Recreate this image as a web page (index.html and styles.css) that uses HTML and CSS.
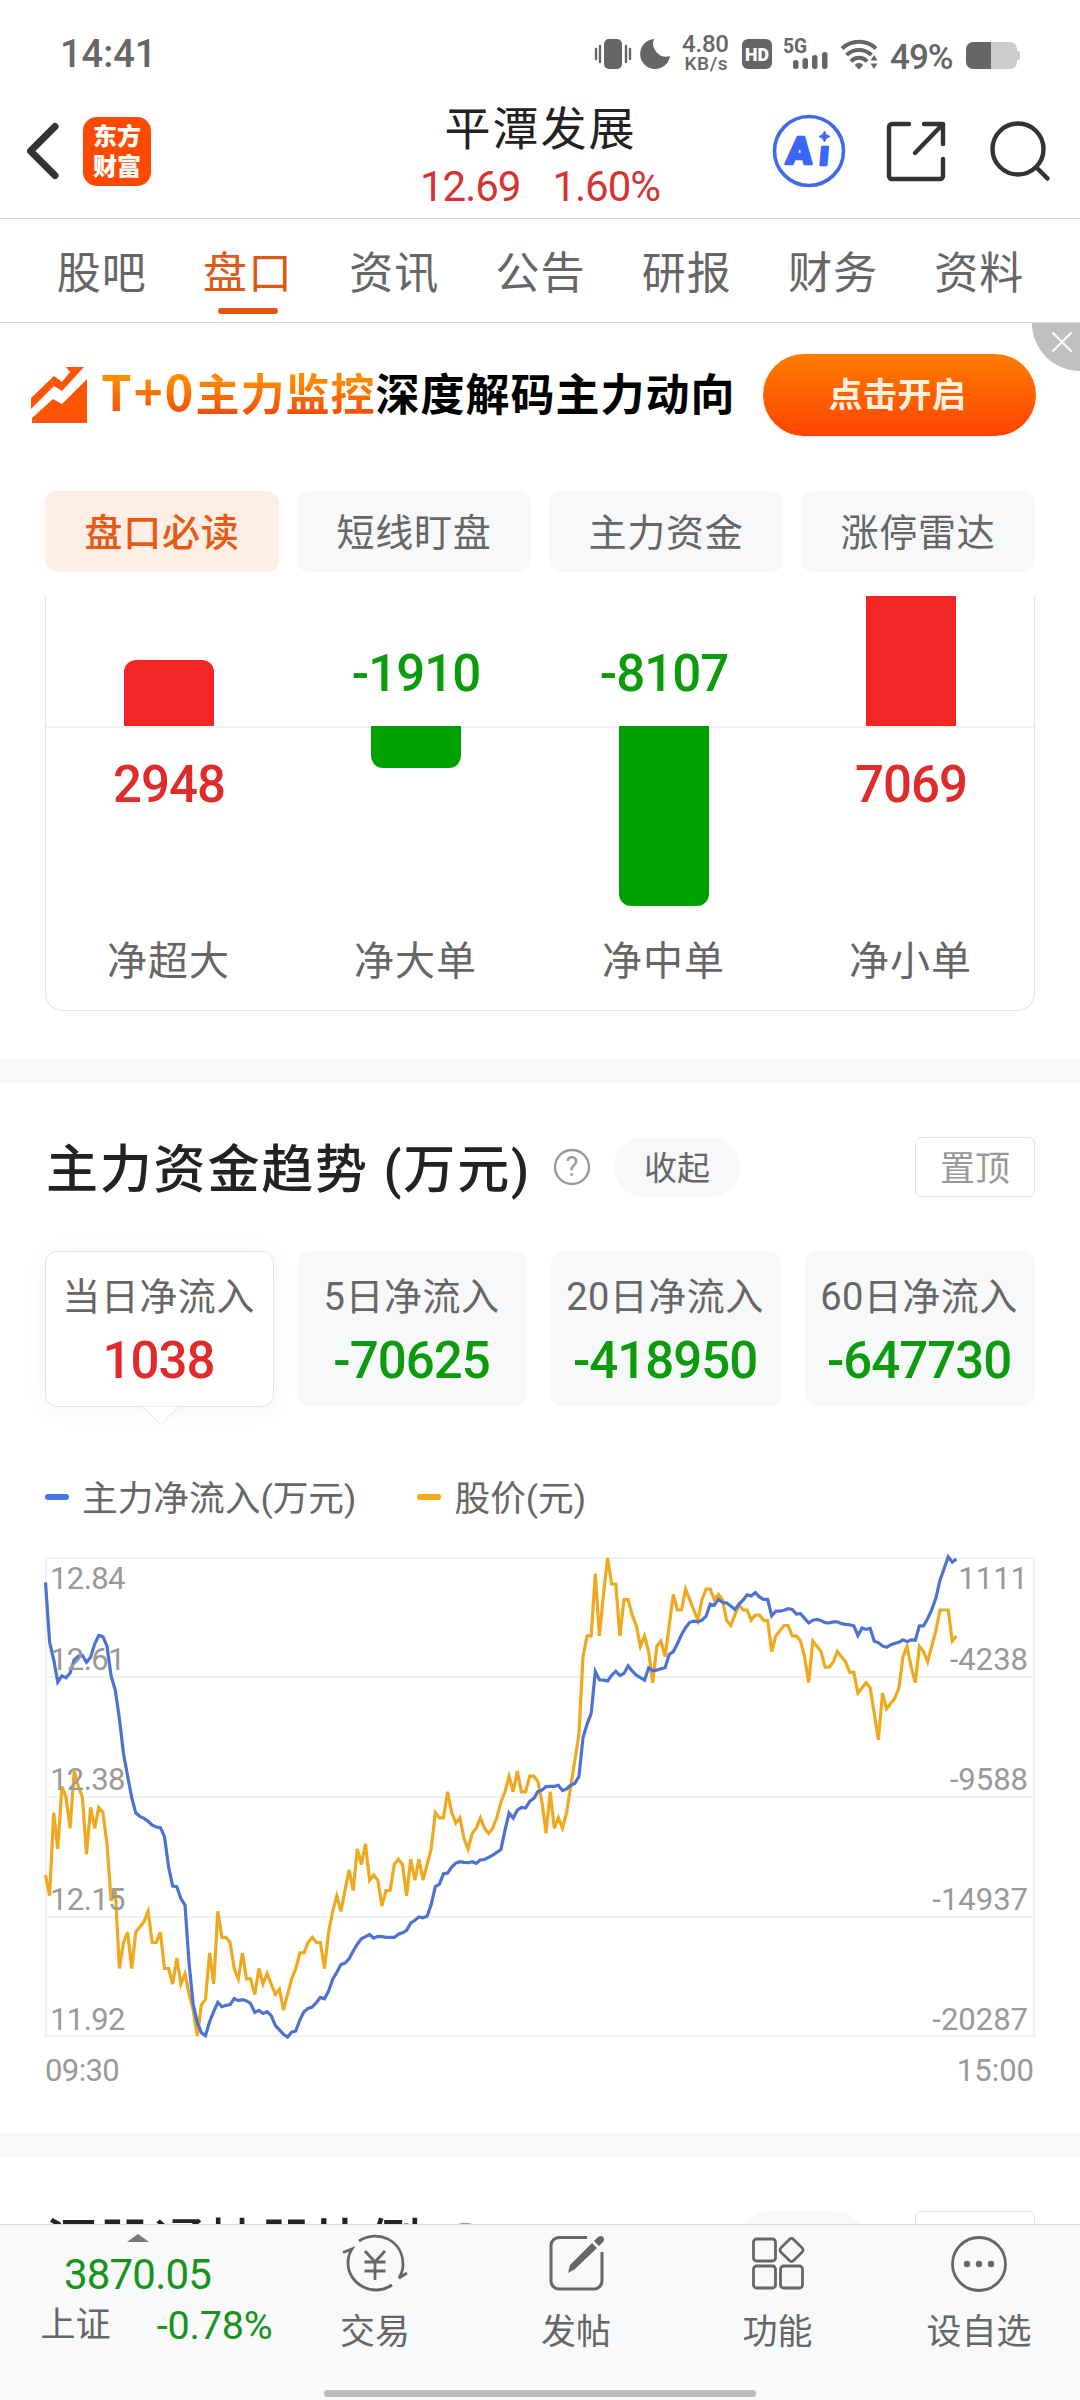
FILE: index.html
```html
<!DOCTYPE html>
<html lang="zh-CN">
<head>
    <title>平潭发展</title>
    <meta charset="utf-8"/>
    <link rel="stylesheet" href="styles.css">
</head>

<body>
    <div class="status-bar">
        <span class="clock">14:41</span>
        <svg class="status-icons" width="210" height="40" viewBox="0 0 210 40">
            <g fill="#666">
                <rect x="9" y="5" width="18" height="30" rx="5"/>
                <path d="M1 15v10M5 12v16M31 12v16M35 15v10" stroke="#666" stroke-width="2.4" stroke-linecap="round"/>
                <path d="M59 5A15 15 0 1 0 75 22A13 13 0 0 1 59 5Z"/>
                <text x="87" y="18" class="speed" textLength="47">4.80</text>
                <text x="89.500" y="36" class="speed small" textLength="43">KB/s</text>
                <rect x="147" y="5" width="30" height="30" rx="6"/>
                <text x="150" y="27" class="hd" textLength="24" lengthAdjust="spacingAndGlyphs">HD</text>
                <text x="188" y="19" class="net" textLength="24" lengthAdjust="spacingAndGlyphs">5G</text>
            </g>
        </svg>
        <svg class="signal-icons" width="100" height="40" viewBox="0 0 100 40">
            <g fill="#666">
                <rect x="2" y="26" width="5.500" height="9" rx="2.500"/>
                <rect x="11.500" y="24" width="5.500" height="11" rx="2.500"/>
                <rect x="21" y="21" width="5.500" height="14" rx="2.500"/>
                <rect x="31" y="18" width="5.500" height="17" rx="2.500"/>
                <path d="M68 29c-2.500 0-4 1-4 2.500l4 4 4-4c0-1.500-1.500-2.500-4-2.500z"/>
                <path d="M83 21l3.500 5.500h-7zM83 35l3.500-5.500h-7z"/>
            </g>
            <path d="M51 14.500a25 25 0 0 1 34 0M55.500 21a18 18 0 0 1 25 0M60 27.500a10.500 10.500 0 0 1 16 0" fill="none" stroke="#666" stroke-width="4"/>
        </svg>
        <span class="battery-text">49%</span>
        <span class="battery"><i></i></span>
    </div>

    <div class="header">
        <svg class="back" width="34" height="58" viewBox="0 0 34 58"><path d="M29 4.500L4.500 29L29 53.500" fill="none" stroke="#333" stroke-width="7" stroke-linecap="round" stroke-linejoin="round"/></svg>
        <div class="logo"><span>东方</span><span>财富</span></div>
        <div class="stock">
            <div class="stock-name">平潭发展</div>
            <div class="stock-price"><span>12.69</span><span>1.60%</span></div>
        </div>
        <div class="header-icons">
            <svg width="74" height="76" viewBox="0 0 74 76">
                <circle cx="37" cy="38" r="34.500" fill="none" stroke="#4169e8" stroke-width="3.600"/>
                <text x="18" y="51" class="ai" transform="skewX(-5)">A</text>
                <text x="51" y="52" class="ai i" transform="skewX(-5)">ı</text>
                <path d="M52.500 18q1 4.500 5.500 5.500q-4.500 1-5.500 5.500q-1-4.500-5.500-5.500q4.500-1 5.500-5.500z" fill="#3f68f0" stroke="#3f68f0"/>
            </svg>
            <svg class="share" width="60" height="60" viewBox="0 0 60 60"><path d="M22 3H5a3 3 0 0 0-3 3v49a3 3 0 0 0 3 3h48a3 3 0 0 0 3-3V38M37 3h19v20M56 3L28 32" fill="none" stroke="#333" stroke-width="4.400" stroke-linecap="round" stroke-linejoin="round"/></svg>
            <svg class="search" width="62" height="64" viewBox="0 0 62 64"><circle cx="29" cy="29" r="25.500" fill="none" stroke="#333" stroke-width="4.400"/><path d="M47.500 47.500l11 11" stroke="#333" stroke-width="4.500" stroke-linecap="round"/></svg>
        </div>
    </div>

    <div class="tabs">
        <span>股吧</span>
        <span class="active">盘口</span>
        <span>资讯</span>
        <span>公告</span>
        <span>研报</span>
        <span>财务</span>
        <span>资料</span>
    </div>

    <div class="banner">
        <svg width="58" height="58" viewBox="0 0 58 58"><path d="M1 57V52L22 33L31 38L56 13V57zM0 32L23 10L31 16L39 6L35 1H53L31 25L23 20L0 43z" fill="#ff5404"/></svg>
        <div class="banner-text"><span class="hot"><b>T+0</b>主力监控</span>深度解码主力动向</div>
        <div class="banner-btn">点击开启</div>
        <div class="close"><svg width="22" height="22" viewBox="0 0 22 22"><path d="M1.500 1.500l19 19M20.500 1.500l-19 19" stroke="#fff" stroke-width="2"/></svg></div>
    </div>

    <div class="chips">
        <span class="active">盘口必读</span>
        <span>短线盯盘</span>
        <span>主力资金</span>
        <span>涨停雷达</span>
    </div>

    <!-- order flow bars -->
    <div class="order-card">
        <div class="order-col">
            <div class="upper"><i class="bar red" style="height:66px"></i></div>
            <div class="lower"><b class="red-text">2948</b></div>
            <p>净超大</p>
        </div>
        <div class="order-col">
            <div class="upper"><b class="green-text">-1910</b></div>
            <div class="lower"><i class="bar green" style="height:42px"></i></div>
            <p>净大单</p>
        </div>
        <div class="order-col">
            <div class="upper"><b class="green-text">-8107</b></div>
            <div class="lower"><i class="bar green" style="height:180px"></i></div>
            <p>净中单</p>
        </div>
        <div class="order-col">
            <div class="upper"><i class="bar red cut" style="height:130px"></i></div>
            <div class="lower"><b class="red-text">7069</b></div>
            <p>净小单</p>
        </div>
    </div>

    <div class="section trend">
        <div class="section-head">
            <h2>主力资金趋势 (万元)</h2>
            <svg class="help" width="38" height="38" viewBox="0 0 38 38"><circle cx="19" cy="19" r="17" fill="none" stroke="#999" stroke-width="2.400"/><text x="19" y="28" text-anchor="middle">?</text></svg>
            <span class="pill">收起</span>
            <span class="pin">置顶</span>
        </div>
        <div class="periods">
            <div class="period active"><span>当日净流入</span><b class="red-text">1038</b></div>
            <div class="period"><span>5日净流入</span><b class="green-text">-70625</b></div>
            <div class="period"><span>20日净流入</span><b class="green-text">-418950</b></div>
            <div class="period"><span>60日净流入</span><b class="green-text">-647730</b></div>
        </div>
        <div class="legend">
            <span><i class="blue"></i>主力净流入(万元)</span>
            <span><i class="yellow"></i>股价(元)</span>
        </div>
        <svg class="chart" width="1080" height="550" viewBox="0 0 1080 550">
            <path class="grid" d="M46 18H1034V496H46zM46 137H1034M46 257H1034M46 377H1034"/>
            <polyline id="price" class="line-price"/>
            <polyline id="flow" class="line-flow"/>
            <g class="axis">
                <text x="50" y="48.500">12.84</text>
                <text x="50" y="130">12.61</text>
                <text x="50" y="250">12.38</text>
                <text x="50" y="370">12.15</text>
                <text x="50" y="490">11.92</text>
                <text x="45" y="541">09:30</text>
            </g>
            <g class="axis end">
                <text x="1028" y="48.500">1111</text>
                <text x="1028" y="130">-4238</text>
                <text x="1028" y="250">-9588</text>
                <text x="1028" y="370">-14937</text>
                <text x="1028" y="490">-20287</text>
                <text x="1034" y="541">15:00</text>
            </g>
        </svg>
    </div>

    <div class="section holding">
        <div class="section-head">
            <h2>深股通持股比例</h2>
            <svg class="help" width="38" height="38" viewBox="0 0 38 38"><circle cx="19" cy="19" r="17" fill="none" stroke="#999" stroke-width="2.400"/></svg>
            <span class="pill"></span>
            <span class="pin"></span>
        </div>
    </div>

    <div class="bottom-bar">
        <div class="index">
            <svg width="22" height="8" viewBox="0 0 22 8"><path d="M0 8L11 0L22 8z" fill="#77787c"/></svg>
            <div class="index-value">3870.05</div>
            <div class="index-row"><span>上证</span><span class="change">-0.78%</span></div>
        </div>
        <div class="nav-item">
            <svg width="68" height="62" viewBox="0 0 68 62" fill="none" stroke="#666" stroke-width="2.800">
                <path d="M18 9C37-3 62 8 62 33q0 6-4 13l8-5"/>
                <path d="M51 53C32 66 7 52 7 31q0-8 4-14l-9 3.500"/>
                <path d="M24 19l10 11l10-11M34 30v18M23.500 30h21M23.500 39h21"/>
            </svg>
            <span>交易</span>
        </div>
        <div class="nav-item">
            <svg width="62" height="62" viewBox="0 0 62 62">
                <path d="M42 5.500H14a8 8 0 0 0-8 8V49a8 8 0 0 0 8 8h35a8 8 0 0 0 8-8V20" fill="none" stroke="#666" stroke-width="3"/>
                <path d="M23 41l2-8L47 11l5 5L30 37zM49 9l4-4q3-2 5 0t0 5l-4 4z" fill="#666"/>
            </svg>
            <span>发帖</span>
        </div>
        <div class="nav-item">
            <svg width="58" height="62" viewBox="0 0 58 62" fill="none" stroke="#666" stroke-width="2.800">
                <rect x="4.500" y="7" width="22" height="22" rx="3"/>
                <rect x="4.500" y="34" width="22" height="22" rx="3"/>
                <rect x="31.500" y="34" width="22" height="22" rx="3"/>
                <rect x="33.500" y="9" width="18" height="18" rx="3" transform="rotate(45 42.500 18)"/>
            </svg>
            <span>功能</span>
        </div>
        <div class="nav-item">
            <svg width="60" height="62" viewBox="0 0 60 62">
                <circle cx="30" cy="32" r="26.500" fill="none" stroke="#666" stroke-width="2.800"/>
                <g fill="#666"><circle cx="18" cy="32" r="3.200"/><circle cx="30" cy="32" r="3.200"/><circle cx="42" cy="32" r="3.200"/></g>
            </svg>
            <span>设自选</span>
        </div>
        <div class="home-line"></div>
    </div>

    <script src="chart.js"></script>
</body>
</html>
```
FILE: styles.css
```css
* {
    box-sizing: border-box;
}
body {
    position: relative;
    width: 1080px;
    height: 2400px;
    margin: 0px;
    overflow: hidden;
    background-color: #fff;
    color: #666;
    font-family: Roboto, "Noto Sans CJK SC", sans-serif;
}
svg {
    display: block;
    flex: none;
    overflow: visible;
}
i, b, h2, p {
    margin: 0px;
    font-style: normal;
}

/* status bar */
.status-bar {
    display: flex;
    align-items: center;
    height: 108px;
    padding: 0px 0px 0px 60px;
}
.clock {
    width: 535px;
    font-size: 38px;
    font-weight: 500;
}
.status-icons {
    margin-bottom: 1px;
}
.signal-icons {
    margin-left: -14px;
}
.speed {font-size: 24px; font-weight: 500;}
.speed.small {font-size: 19px;}
.hd {font-size: 18px; font-weight: 900; fill: #fff;}
.net {font-size: 21px; font-weight: 700;}
.battery-text {
    width: 76px;
    font-size: 35px;
    font-weight: 500;
    letter-spacing: -1px;
    padding-top: 6px;
    margin-left: -1px;
}
.battery {
    display: flex;
    align-items: center;
    margin-top: 3px;
}
.battery i {
    width: 51px;
    height: 27px;
    border-radius: 7px;
    background: linear-gradient(90deg, #666 25px, #ccc 25px);
}
.battery::after {
    content: "";
    width: 3px;
    height: 9px;
    border-radius: 0px 2px 2px 0px;
    background-color: #ccc;
}

/* header */
.header {
    display: flex;
    height: 111px;
    border-bottom: 1px solid #d8d8d8;
}
.back {
    margin: 14px 0px 0px 26px;
}
.logo {
    display: flex;
    flex-direction: column;
    justify-content: center;
    width: 68px;
    height: 69px;
    margin: 9px 0px 0px 23px;
    border-radius: 14px;
    background-color: #ff4800;
    color: #fff;
    font-size: 24px;
    font-weight: 900;
    line-height: 30px;
    text-align: center;
}
.stock {
    width: 540px;
    margin-left: 119px;
    text-align: center;
}
.stock-name {
    height: 46px;
    padding-left: 1px;
    color: #222;
    font-size: 46px;
    letter-spacing: 2px;
    line-height: 42px;
}
.stock-price {
    display: flex;
    justify-content: center;
    gap: 32px;
    padding-top: 12px;
    color: #d63434;
    font-size: 42px;
    line-height: 42px;
    letter-spacing: -1px;
}
.header-icons {
    display: flex;
    margin-left: -38px;
}
.header-icons svg {margin-top: 5px;}
.header-icons .share {margin: 13px 0px 0px 41px;}
.header-icons .search {margin: 12px 0px 0px 42px;}
.ai {
    font-size: 38px;
    font-weight: 900;
    fill: #3a66fa;
    stroke: #3a66fa;
    stroke-width: 2.5;
    stroke-linejoin: round;
}
.ai.i {font-size: 34px;}

/* tabs */
.tabs {
    display: grid;
    grid-template-columns: repeat(7, 1fr);
    height: 104px;
    padding: 0px 28px;
    border-bottom: 1px solid #d8d8d8;
    font-size: 44px;
    letter-spacing: 1px;
    text-align: center;
}
.tabs span {
    display: flex;
    flex-direction: column;
    align-items: center;
    height: 96px;
    padding-left: 1px;
    line-height: 110px;
}
.tabs .active {
    color: #dc5a14;
}
.tabs .active::after {
    content: "";
    width: 60px;
    height: 6px;
    flex: none;
    margin-top: -21px;
    border-radius: 3px;
    background-color: #e2570c;
}

/* banner */
.banner {
    position: relative;
    display: flex;
    align-items: center;
    height: 143px;
    padding-left: 31px;
}
.banner-text {
    width: 662px;
    padding: 0px 0px 3px 12px;
    color: #000;
    font-size: 44px;
    font-weight: 700;
    letter-spacing: 1px;
    line-height: 60px;
    white-space: nowrap;
}
.hot {
    background: linear-gradient(#ff8a00 20%, #f4500a 80%);
    -webkit-background-clip: text;
    background-clip: text;
    color: transparent;
}
.hot b {
    font-family: "Noto Sans CJK SC", sans-serif;
    font-size: 49px;
    font-weight: 700;
    letter-spacing: 2px;
}
.banner-btn {
    width: 273px;
    height: 82px;
    margin: 0px 0px 0px 12px;
    border-radius: 42px;
    background: linear-gradient(#ff7d00, #ff4400);
    color: #fff3e0;
    font-size: 34px;
    font-weight: 700;
    letter-spacing: 0.5px;
    line-height: 82px;
    padding-right: 4px;
    text-align: center;
}
.close {
    position: absolute;
    top: 0px;
    right: 0px;
    width: 48px;
    height: 48px;
    padding: 8px 0px 0px 19px;
    border-bottom-left-radius: 48px;
    background-color: #bfbfbf;
}

/* sub tabs */
.chips {
    display: grid;
    grid-template-columns: repeat(4, 1fr);
    gap: 18px;
    height: 130px;
    padding: 25px 45px 24px;
}
.chips span {
    height: 81px;
    border-radius: 12px;
    background-color: #f7f8fa;
    font-size: 38px;
    letter-spacing: 0.8px;
    line-height: 84px;
    text-align: center;
}
.chips .active {
    background-color: #ffeee6;
    color: #e65a14;
    font-weight: 500;
}

.red-text {color: #e02b2b;}
.green-text {color: #0c9b0c;}
.order-card b, .period b {
    font-size: 51px;
    font-weight: 500;
    letter-spacing: -1px;
}

.order-card {
    display: grid;
    grid-template-columns: 246px 248px 248px 246px;
    height: 415px;
    margin: 0px 45px 48px;
    border: 1px solid #e6e6e6;
    border-top: 0px;
    border-radius: 0px 0px 18px 18px;
    text-align: center;
}
.upper, .lower {
    display: flex;
    flex-direction: column;
    align-items: center;
}
.upper {
    height: 130px;
    justify-content: flex-end;
}
.lower {
    height: 206px;
    border-top: 2px solid #f1f1f1;
}
.upper b {margin-bottom: 23px;}
.lower b {margin-top: 27px;}
.bar {
    display: block;
    width: 90px;
}
.bar.red {
    border-radius: 12px 12px 0px 0px;
    background-color: #f42525;
}
.bar.cut {border-radius: 0px;}
.bar.green {
    flex: none;
    margin-top: -2px;
    border-radius: 0px 0px 12px 12px;
    background-color: #00a000;
}
.order-col p {
    padding-right: 1px;
    font-size: 40px;
    letter-spacing: 1px;
    line-height: 60px;
}

/* sections */
.section {
    border-top: 24px solid #f7f8fa;
}
.section-head {
    display: flex;
    padding: 54px 45px 0px;
}
h2 {
    height: 60px;
    padding-left: 1px;
    color: #222;
    font-size: 52px;
    font-weight: 500;
    letter-spacing: 1.800px;
    line-height: 67px;
    white-space: nowrap;
}
.trend h2 {width: 508px;}
.holding h2 {width: 401px;}
.help {margin-top: 11px;}
.help text {
    fill: #999;
    font-size: 27px;
}
.pill {
    width: 126px;
    height: 60px;
    margin-left: 23px;
    border-radius: 30px;
    background-color: #f7f8fa;
    font-size: 33px;
    line-height: 63px;
    text-align: center;
}
.holding .pill {margin-left: 255px;}
.pin {
    width: 120px;
    height: 60px;
    margin-left: auto;
    border: 1px solid #e2e2e2;
    border-radius: 6px;
    color: #999;
    font-size: 35px;
    line-height: 63px;
    text-align: center;
}
.periods {
    display: grid;
    grid-template-columns: 229px 229px 230px 230px;
    gap: 24px;
    padding: 54px 45px 0px;
}
.period {
    display: flex;
    flex-direction: column;
    align-items: center;
    height: 156px;
    padding-top: 16px;
    padding-right: 2px;
    border-radius: 12px;
    background-color: #f7f8fa;
    white-space: nowrap;
}
.period span {
    height: 60px;
    font-size: 38px;
    letter-spacing: 0.5px;
    line-height: 61px;
}
.period b {line-height: 68px;}
.period.active {
    position: relative;
    padding-top: 15px;
    border: 1px solid #e4e4e4;
    background-color: #fff;
    box-shadow: 0px 2px 24px rgba(0, 0, 0, 0.05);
}
/* pointer under the selected card */
.period.active::after {
    content: "";
    position: absolute;
    bottom: -14px;
    left: 101px;
    width: 26px;
    height: 26px;
    border: 1px solid #e4e4e4;
    border-width: 0px 1px 1px 0px;
    background-color: #fff;
    transform: rotate(45deg);
    clip-path: polygon(100% 0, 100% 100%, 0 100%);
}
.legend {
    display: flex;
    gap: 61px;
    height: 133px;
    padding: 66px 45px 0px;
    font-size: 35.7px;
    line-height: 50px;
}
.legend span {
    display: flex;
    align-items: center;
    height: 52px;
}
.legend i {
    width: 24px;
    height: 6px;
    margin: 0px 13px 4px 0px;
    border-radius: 3px;
}
.blue {background-color: #4a72e8;}
.yellow {background-color: #f8a810;}
.chart {
    margin-bottom: 43px;
}
.grid {
    fill: none;
    stroke: #f1f1f1;
    stroke-width: 2;
}
.line-price, .line-flow {
    fill: none;
    stroke-width: 3.200;
}
.line-price {stroke: #f0a91f;}
.line-flow {stroke: #4c73d2;}
.axis {
    fill: #999;
    font-size: 31px;
    letter-spacing: -0.6px;
}
.end {text-anchor: end; letter-spacing: 0px;}

/* bottom bar */
.bottom-bar {
    position: absolute;
    left: 0px;
    bottom: 0px;
    display: grid;
    grid-template-columns: 275px 201px 201px 202px 201px;
    width: 1080px;
    height: 176px;
    border-top: 1px solid #d5dadf;
    background-color: #f7f9fb;
}
.index {
    display: flex;
    flex-direction: column;
    align-items: center;
    padding-top: 9px;
}
.index-value {
    padding-top: 12px;
    color: #199319;
    font-size: 42px;
    letter-spacing: -0.8px;
    line-height: 42px;
}
.index-row {
    display: flex;
    justify-content: space-between;
    width: 232px;
    margin: 5px 0px 0px 38px;
    font-size: 35px;
    line-height: 50px;
}
.change {
    color: #199319;
    font-size: 39.5px;
    letter-spacing: -0.2px;
}
.nav-item {
    display: flex;
    flex-direction: column;
    align-items: center;
    padding-top: 7px;
    padding-right: 1px;
    font-size: 35px;
    line-height: 50px;
}
.nav-item span {
    padding-top: 14px;
}
.home-line {
    position: absolute;
    left: 324px;
    bottom: 3px;
    width: 432px;
    height: 7px;
    border-radius: 4px;
    background-color: #bbbcbe;
}
```
FILE: chart.js
```js
// one value per minute from 09:30, price in cents
var price = [
    1223,1219,1235,1228,1240,1238,1232,1243,1240,1238,1227,1236,1232,1236,1235,1229,1218,1220,1205,1210,
    1212,1205,1212,1213,1214,1216,1210,1210,1212,1205,1205,1202,1207,1202,1204,1200,1197,1192,1198,1199,
    1208,1202,1216,1211,1211,1210,1205,1203,1208,1203,1203,1200,1205,1202,1204,1202,1200,1201,1197,1200,
    1203,1205,1208,1208,1210,1211,1210,1210,1205,1212,1216,1219,1216,1220,1224,1220,1228,1225,1229,1222,
    1223,1222,1217,1220,1220,1225,1226,1225,1219,1226,1222,1226,1222,1225,1228,1235,1234,1234,1239,1235,
    1233,1234,1230,1228,1231,1232,1234,1232,1231,1232,1234,1237,1239,1242,1239,1243,1239,1239,1242,1242,
    1241,1237,1231,1239,1232,1234,1232,1235,1240,1245,1250,1265,1269,1269,1281,1269,1277,1284,1279,1279,
    1269,1276,1276,1273,1271,1267,1269,1266,1260,1267,1268,1265,1271,1277,1274,1274,1278,1276,1274,1272,
    1276,1278,1278,1276,1277,1276,1272,1271,1273,1275,1274,1274,1272,1273,1273,1272,1272,1266,1269,1270,
    1271,1271,1269,1269,1268,1265,1260,1268,1267,1266,1263,1263,1264,1266,1265,1264,1262,1262,1258,1259,
    1260,1259,1254,1249,1258,1255,1256,1257,1259,1265,1267,1263,1260,1267,1266,1264,1267,1270,1274,1274,
    1274,1268,1269
];

// inflow levels, 50 is the top grid line and 1388 the bottom one
var flow = [
    118,285,335,397,380,385,372,335,325,323,342,328,291,267,270,297,380,420,500,598,
    660,720,764,773,779,787,798,803,805,830,915,968,970,1003,1021,1185,1300,1350,1379,1387,
    1348,1320,1294,1306,1302,1300,1283,1289,1286,1290,1297,1322,1316,1325,1320,1331,1358,1371,1383,1391,
    1377,1374,1343,1320,1311,1307,1295,1280,1284,1262,1229,1210,1188,1184,1172,1150,1131,1116,1110,1104,
    1114,1109,1110,1112,1112,1112,1103,1099,1092,1072,1064,1055,1057,1053,1020,970,963,934,932,915,
    904,900,902,903,900,905,895,894,888,882,874,866,812,764,778,756,748,750,731,723,
    704,700,690,689,689,686,701,696,686,681,662,553,515,485,368,391,392,394,378,367,
    379,373,352,366,378,385,392,358,366,364,360,357,320,312,290,265,245,230,227,229,
    224,213,179,182,166,174,176,184,194,180,168,153,156,147,159,166,166,212,199,199,
    196,192,194,207,206,219,232,224,222,225,231,232,229,229,234,236,237,240,267,246,
    250,247,283,287,296,300,293,289,286,279,284,279,280,240,240,220,195,162,112,80,
    47,62,53
];

function draw(id, data, top, bottom) {
    var str = "";
    for (var i = 0; i < data.length; i++) {
        var x = 45.5 + i * 4.103;
        var y = 18 + (data[i] - top) / (bottom - top) * 478;
        str += x.toFixed(1) + "," + y.toFixed(1) + " ";
    }
    document.getElementById(id).setAttribute("points", str);
}

draw("price", price, 1284, 1192);
draw("flow", flow, 50, 1388);
```
